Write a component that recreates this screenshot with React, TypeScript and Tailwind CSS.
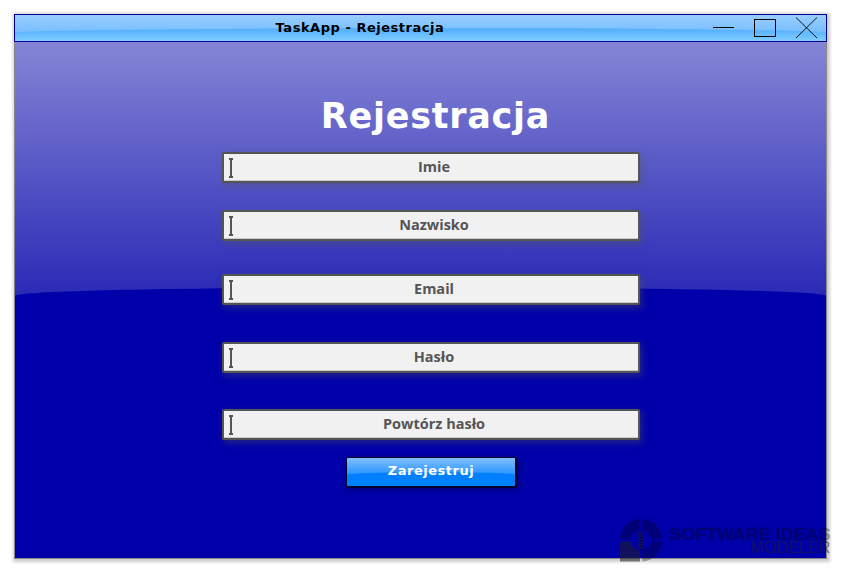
import React from "react";

const FIELDS = [
  { label: "Imie", gap: "" },
  { label: "Nazwisko", gap: "mt-[27px]" },
  { label: "Email", gap: "mt-[33px]" },
  { label: "Hasło", gap: "mt-[37px]" },
  { label: "Powtórz hasło", gap: "mt-[36px]" },
];

function TitleBar() {
  return (
    <header className="relative flex h-7 w-[813px] items-center border border-[#000090] bg-[linear-gradient(#4fadfb,#4fadfb_50%,#7fccff)]">
      <svg className="absolute inset-0" width="811" height="26" viewBox="0 0 811 26">
        <defs>
          <linearGradient id="barShine" x1="0" y1="0" x2="0" y2="1">
            <stop offset="0" stopColor="#99ceff" />
            <stop offset="1" stopColor="#79beff" />
          </linearGradient>
        </defs>
        <path d="M0 0H811V17C690 12 120 12 0 17Z" fill="url(#barShine)" />
      </svg>
      <h2 className="relative w-[690px] pb-px text-center font-['DejaVu_Sans',sans-serif] text-[13px] leading-4 font-bold tracking-[0.53px] text-black">
        TaskApp - Rejestracja
      </h2>
      <svg className="absolute top-0 right-0" width="121" height="26" viewBox="0 0 121 26" fill="none" stroke="#000">
        <path d="M8 12.5H29" />
        <rect x="49.500" y="4.500" width="21" height="17" />
        <path d="M91 2.500L112 23M112 2.500L91 23" strokeWidth="0.9" />
      </svg>
    </header>
  );
}

function Field({ label, gap }: { label: string; gap: string }) {
  return (
    <div
      className={`relative flex h-[31px] w-[418px] shrink-0 items-center justify-center rounded-[2px] border-2 border-[#555] bg-[#f1f1f1] shadow-[2px_3px_6px_1px_rgba(85,85,85,0.35),inset_0_-1px_0_#ccc] ${gap}`}
    >
      <svg className="absolute top-1 left-[5px]" width="4" height="20" viewBox="0 0 4 20" fill="#555">
        <path d="M0 0H4V2H3V18H4V20H0V18H1V2H0Z" />
      </svg>
      <span className="relative -top-px left-[3.500px] font-['Open_Sans','Noto_Sans',sans-serif] text-[14.500px] leading-5 font-bold text-[#555]">
        {label}
      </span>
    </div>
  );
}

function Watermark() {
  return (
    <div className="absolute top-[519px] left-[619px] h-[44px] w-[213px]">
      <svg width="213" height="44" viewBox="0 0 213 44">
        <g fill="none" stroke="#000" strokeOpacity=".29" strokeWidth="11">
          <path d="M6.500 20.500A15.500 15.500 0 0 1 21 5.500" />
          <path d="M23 5.500A15.500 15.500 0 0 1 37.500 20.500" />
          <path d="M37.500 22.500A15.500 15.500 0 0 1 23 37" />
        </g>
        <path d="M1 22.500H12C12.500 27 16 31 21 32V42.500H1Z" fill="#1e1e1e" fillOpacity=".55" />
        <path d="M21 13H24V31H21Z" fill="#00005a" fillOpacity=".7" />
        <path d="M19 14H25M19 17H25M19 20H25M19 23H25M19 26H25M19 29H25" stroke="#18183c" strokeOpacity=".65" strokeWidth="2" />
        <g opacity=".3">
          <text x="50.500" y="20.500" fontSize="16.500" fontWeight="900" stroke="#000" strokeWidth=".6" textLength="161" lengthAdjust="spacingAndGlyphs" className="font-['Liberation_Sans',sans-serif]">SOFTWARE IDEAS</text>
        </g>
        <text x="131.500" y="34" fontSize="16.500" fill="#1e1e1e" fillOpacity=".55" textLength="80" lengthAdjust="spacingAndGlyphs" className="font-['Liberation_Sans',sans-serif]">MODELER</text>
      </svg>
    </div>
  );
}

export default function App() {
  return (
    <div className="relative h-[573px] w-[841px] overflow-hidden bg-white p-[14px]">
      <main className="flex h-[545px] w-[813px] flex-col shadow-[1px_1px_3px_2px_rgba(0,0,0,0.2)]">
        <TitleBar />
        <section className="relative flex h-[517px] w-[813px] flex-col items-center border-x border-b border-[#888] bg-[#0000aa]">
          <svg className="absolute inset-0" width="811" height="516" viewBox="0 0 811 516">
            <defs>
              <linearGradient id="bodyShine" x1="0" y1="0" x2="0" y2="1">
                <stop offset="0" stopColor="#8585d6" />
                <stop offset="1" stopColor="#2a2ab6" />
              </linearGradient>
            </defs>
            <path d="M0 0H811V253.500C790 242.500 21 242.500 0 253.500Z" fill="url(#bodyShine)" />
          </svg>
          <h1 className="relative left-[15px] mt-[51px] h-[59px] font-['DejaVu_Sans',sans-serif] text-[35px] leading-[46px] font-bold tracking-[0.750px] text-white">
            Rejestracja
          </h1>
          <form className="relative ml-5 flex flex-col items-center">
            {FIELDS.map((field) => (
              <Field key={field.label} {...field} />
            ))}
            <button
              type="button"
              className="relative left-px mt-[17px] h-[31px] w-[171px] overflow-hidden rounded-[2px] border border-r-2 border-b-2 border-[#00002f] bg-[#007fff] shadow-[1px_1px_4px_1px_rgba(0,0,0,0.3)]"
            >
              <svg className="absolute inset-0" width="168" height="28" viewBox="0 0 168 28">
                <defs>
                  <linearGradient id="buttonShine" x1="0" y1="0" x2="0" y2="1">
                    <stop offset="0" stopColor="#80bfff" />
                    <stop offset="1" stopColor="#2893ff" />
                  </linearGradient>
                </defs>
                <path d="M0 0H168V16.500C145 13.500 22 13.500 0 16.500Z" fill="url(#buttonShine)" />
              </svg>
              <span className="relative -top-px block font-['DejaVu_Sans',sans-serif] text-[13px] leading-7 font-bold tracking-[0.500px] text-white">
                Zarejestruj
              </span>
            </button>
          </form>
        </section>
      </main>
      <Watermark />
    </div>
  );
}
